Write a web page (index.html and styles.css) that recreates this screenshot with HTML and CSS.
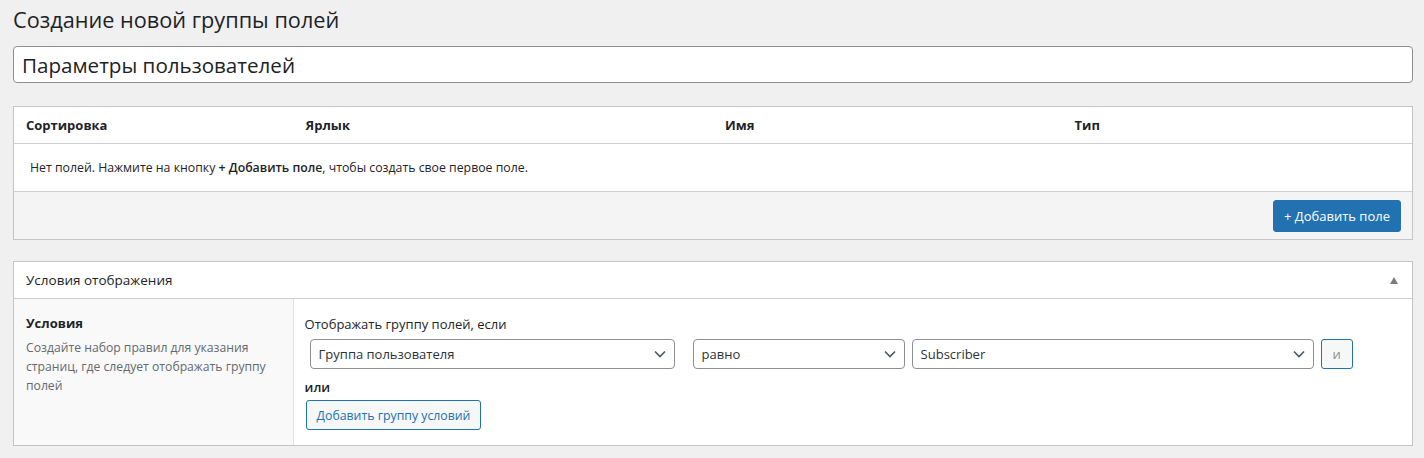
FILE: index.html
```html
<!DOCTYPE html>
<html lang="ru">
<head>
<meta charset="utf-8">
<title>Создание новой группы полей</title>
<link rel="stylesheet" href="styles.css">
</head>
<body>
<div class="wrap">
  <h1 class="page-title">Создание новой группы полей</h1>
  <input class="title-input" type="text" value="Параметры пользователей">

  <div class="fields-box">
    <div class="fields-head">
      <div>Сортировка</div>
      <div>Ярлык</div>
      <div>Имя</div>
      <div>Тип</div>
    </div>
    <div class="fields-empty">Нет полей. Нажмите на кнопку <b>+ Добавить поле</b>, чтобы создать свое первое поле.</div>
    <div class="fields-foot">
      <button class="btn-primary">+ Добавить поле</button>
    </div>
  </div>

  <div class="cond-box">
    <div class="cond-head">
      <span>Условия отображения</span>
      <span class="toggle"></span>
    </div>
    <div class="cond-body">
      <div class="cond-label">
        <div class="cond-title">Условия</div>
        <div class="cond-desc">Создайте набор правил для указания страниц, где следует отображать группу полей</div>
      </div>
      <div class="cond-rules">
        <div class="rules-title">Отображать группу полей, если</div>
        <div class="rule-row">
          <div class="select s1">Группа пользователя<svg class="chev" viewBox="0 0 12 8"><path d="M1 1.5l5 5 5-5" fill="none" stroke="#50575e" stroke-width="1.6"/></svg></div>
          <div class="select s2">равно<svg class="chev" viewBox="0 0 12 8"><path d="M1 1.5l5 5 5-5" fill="none" stroke="#50575e" stroke-width="1.6"/></svg></div>
          <div class="select s3">Subscriber<svg class="chev" viewBox="0 0 12 8"><path d="M1 1.5l5 5 5-5" fill="none" stroke="#50575e" stroke-width="1.6"/></svg></div>
          <button class="btn-and">и</button>
        </div>
        <div class="or">или</div>
        <button class="btn-secondary">Добавить группу условий</button>
      </div>
    </div>
  </div>
</div>
</body>
</html>
```
FILE: styles.css
```css
* { box-sizing: border-box; }
html, body { margin: 0; padding: 0; }
body {
  background: #f0f0f1;
  font-family: "Open Sans", "Noto Sans", sans-serif;
  font-size: 13px;
  color: #1d2327;
  width: 1424px;
  height: 458px;
  overflow: hidden;
}
.wrap { padding: 0 11px 0 13px; }
.page-title {
  margin: 0;
  padding: 5px 0 0 0;
  height: 46px;
  font-size: 21.7px;
  font-weight: 400;
  line-height: 29px;
  color: #1d2327;
}
.title-input {
  display: block;
  width: 100%;
  height: 37px;
  margin: 0;
  padding: 0 8px;
  border: 1px solid #8c8f94;
  border-radius: 4px;
  background: #fff;
  font-family: inherit;
  font-size: 20.6px;
  color: #1d2327;
  outline: none;
}
.fields-box {
  margin-top: 23px;
  border: 1px solid #c3c4c7;
  background: #fff;
}
.fields-head {
  display: grid;
  grid-template-columns: 20% 30% 25% 25%;
  height: 37px;
  align-items: center;
  font-weight: 700;
  border-bottom: 1px solid #ccd0d4;
}
.fields-head > div { padding-left: 12px; }
.fields-empty {
  height: 48px;
  line-height: 47px;
  padding-left: 16px;
  border-bottom: 1px solid #ccd0d4;
  font-size: 12.3px;
}
.fields-empty b { font-weight: 600; }
.fields-foot {
  height: 47px;
  background: #f4f4f4;
  display: flex;
  justify-content: flex-end;
  align-items: center;
  padding-right: 11px;
}
.btn-primary {
  height: 32px;
  padding: 0 10px;
  background: #2271b1;
  color: #fff;
  border: 1px solid #2271b1;
  border-radius: 3px;
  font-family: inherit;
  font-size: 13px;
}
.cond-box {
  margin-top: 21px;
  border: 1px solid #c3c4c7;
  background: #fff;
}
.cond-head {
  height: 37px;
  display: flex;
  align-items: center;
  justify-content: space-between;
  padding: 0 14px 0 12px;
  border-bottom: 1px solid #ccd0d4;
  font-size: 13.5px;
  font-weight: 500;
}
.toggle {
  width: 0; height: 0;
  border-left: 4px solid transparent;
  border-right: 4px solid transparent;
  border-bottom: 7px solid #787c82;
}
.cond-body { display: flex; }
.cond-label {
  width: 20%;
  flex: none;
  background: #f9f9f9;
  border-right: 1px solid #e1e1e1;
  padding: 15px 12px 0 12px;
}
.cond-title { font-weight: 700; line-height: 19px; }
.cond-desc { color: #646970; line-height: 19.2px; margin-top: 5px; font-size: 12.2px;}
.cond-rules {
  flex: 1;
  padding: 16px 12px 15px 11px;
}
.rules-title { font-weight: 500; line-height: 19px; }
.rule-row {
  display: flex;
  align-items: center;
  margin-top: 5px;
  padding-left: 4px;
}
.select {
  height: 30px;
  border: 1px solid #8c8f94;
  border-radius: 4px;
  background: #fff;
  display: flex;
  align-items: center;
  justify-content: space-between;
  padding: 0 8px 0 8px;
  color: #2c3338;
  font-size: 13px;
}
.chev { width: 12px; height: 8px; }
.s1 { width: 365px; margin-right: 18px; margin-left: 1px; }
.s2 { width: 212px; margin-right: 7px; }
.s3 { width: 402px; margin-right: 7px; }
.btn-and {
  width: 32px; height: 30px;
  border: 1px solid #2271b1;
  border-radius: 3px;
  background: #f6f7f7;
  color: #8c8f94;
  font-family: inherit;
  font-size: 13px;
  padding: 0;
}
.or { font-weight: 600; margin-top: 9px; line-height: 19px; color: #1d2327;}
.btn-secondary {
  margin-top: 3px;
  margin-left: 1px;
  height: 30px;
  padding: 0 10px;
  border: 1px solid #2271b1;
  border-radius: 3px;
  background: #f6f7f7;
  color: #2271b1;
  font-family: inherit;
  font-size: 12.3px;
}
```
